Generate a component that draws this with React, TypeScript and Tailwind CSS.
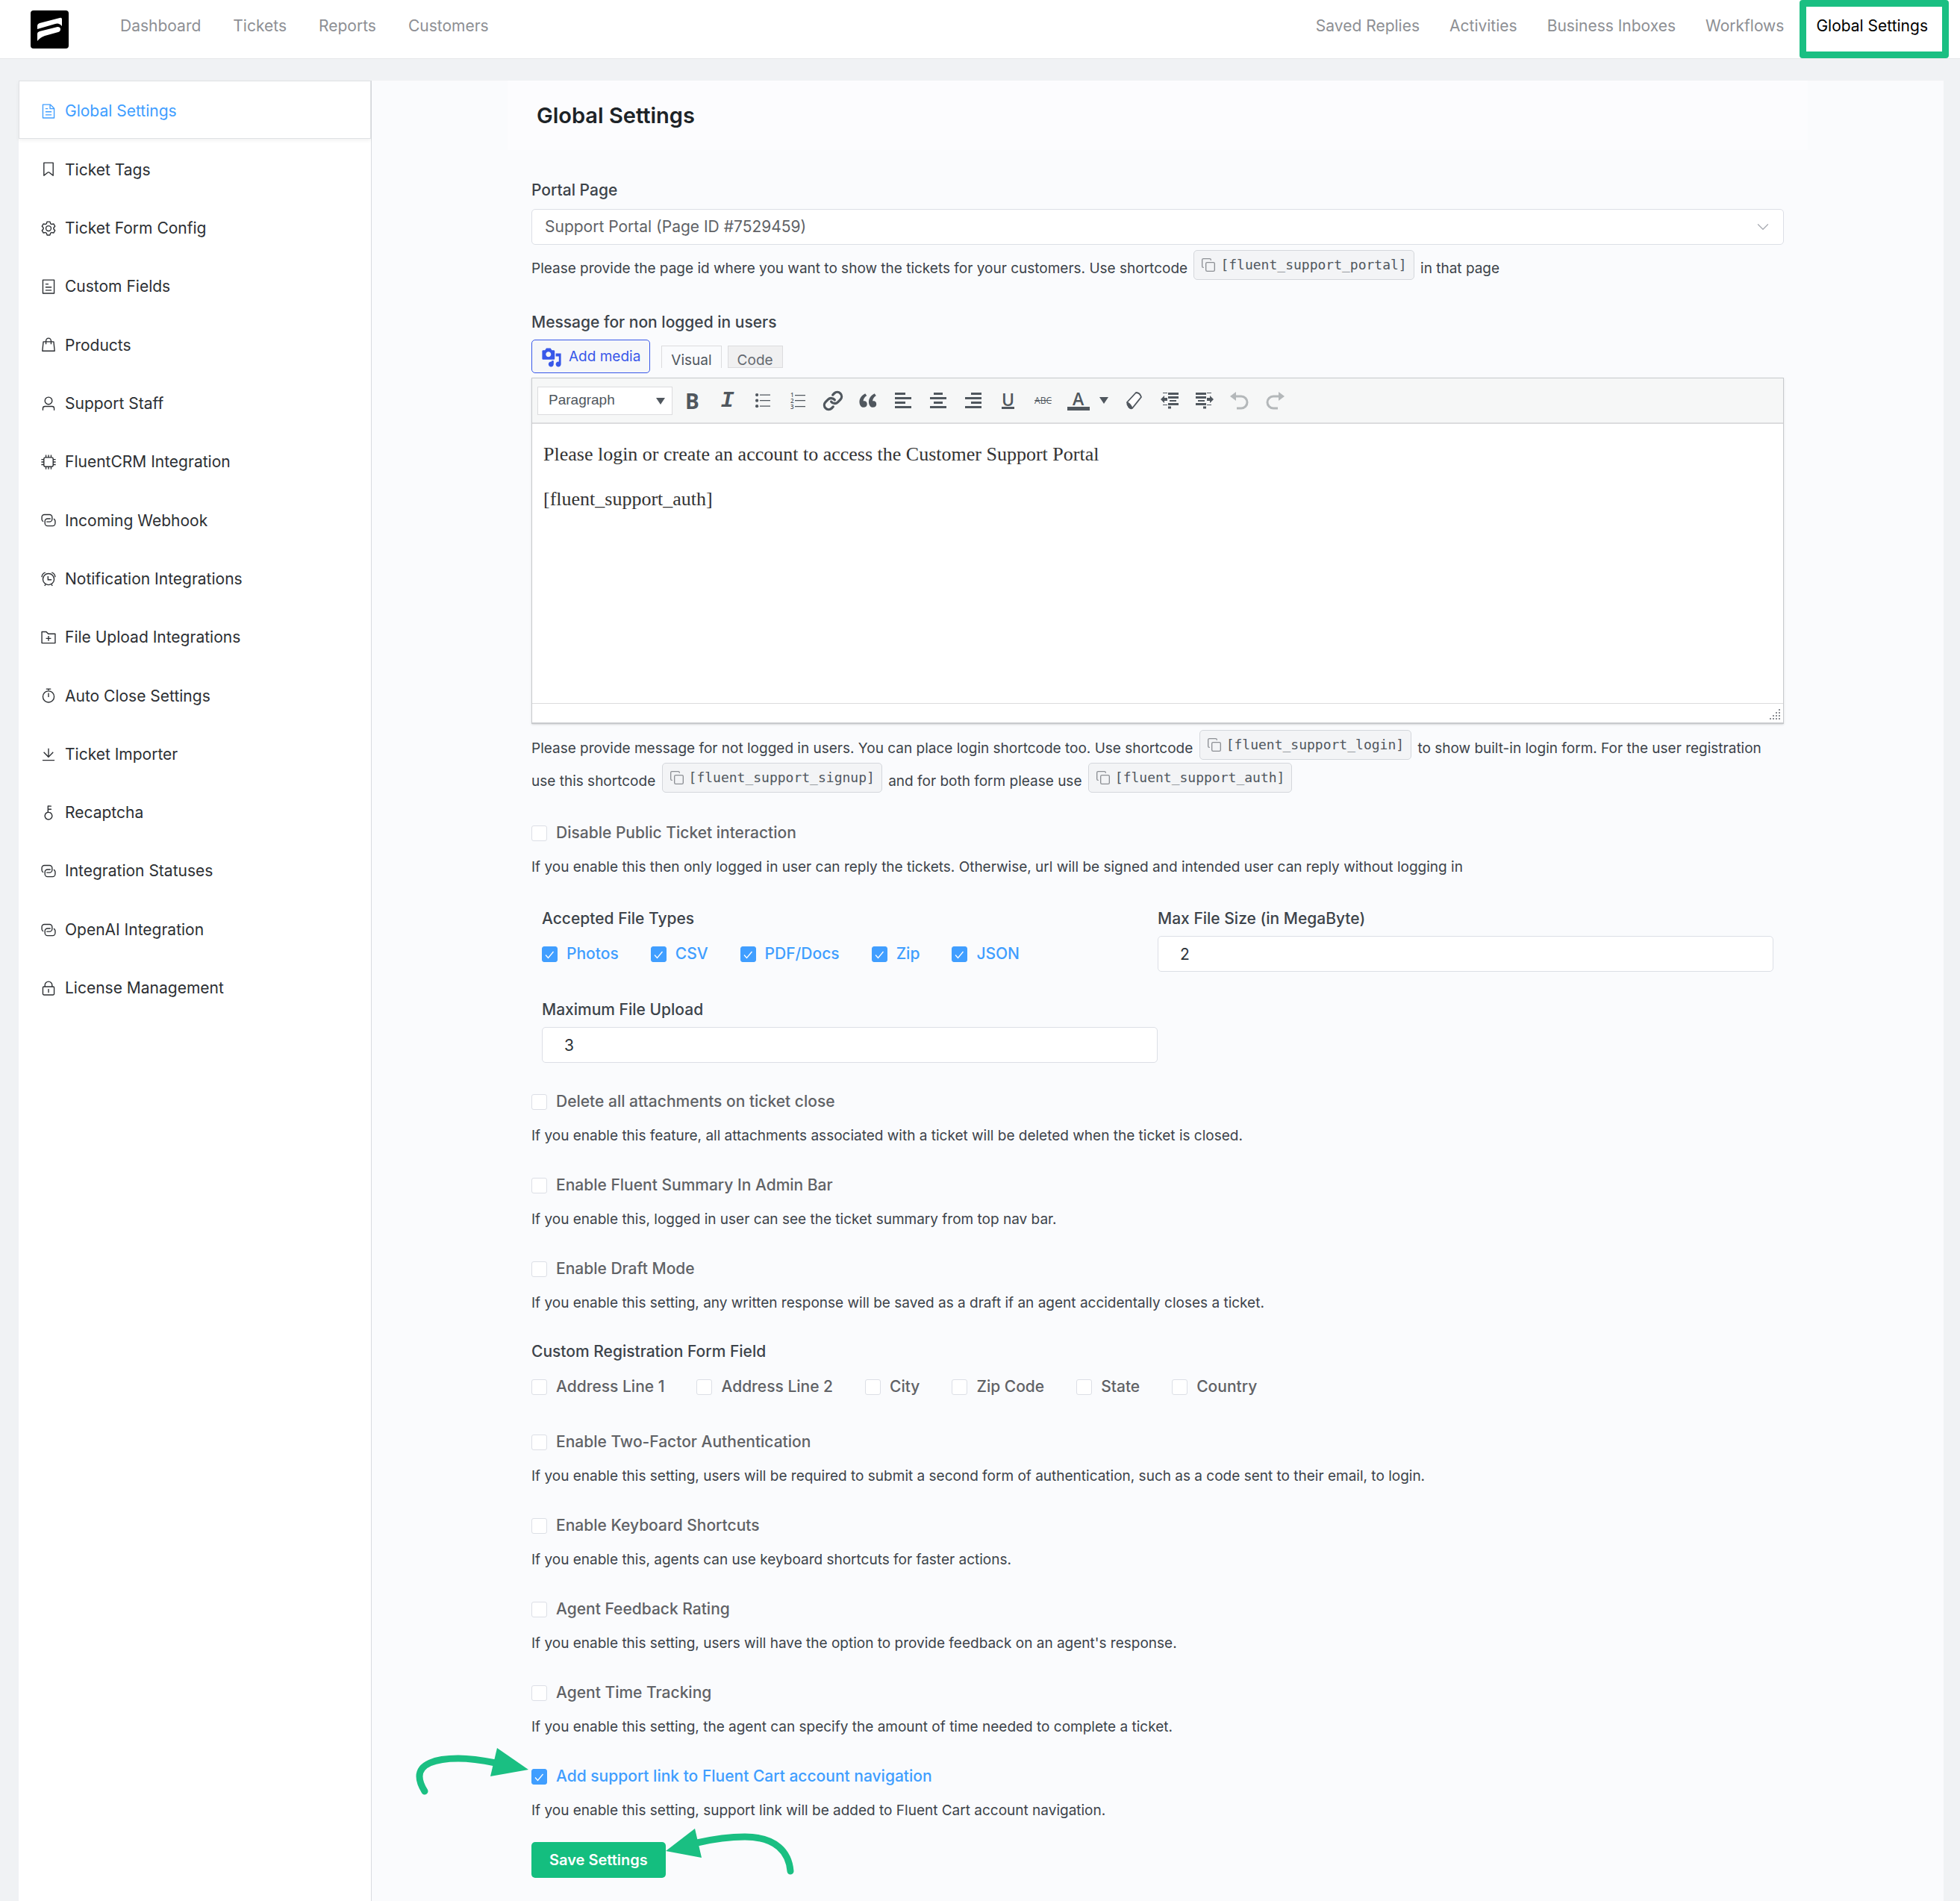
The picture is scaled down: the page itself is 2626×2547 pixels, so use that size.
import { ReactNode, useId, useState } from 'react';
import { ChevronDown, Copy, Link as LinkIcon } from 'lucide-react';

/* ==========================================================
   icons (1024 grid, filled)
   ========================================================== */
const connection =
  'M640 384v64H448a128 128 0 0 0-128 128v128a128 128 0 0 0 128 128h320a128 128 0 0 0 128-128V576a128 128 0 0 0-64-110.848V394.88c74.56 26.368 128 97.472 128 181.056v128a192 192 0 0 1-192 192H448a192 192 0 0 1-192-192V576a192 192 0 0 1 192-192zM384 640v-64h192a128 128 0 0 0 128-128V320a128 128 0 0 0-128-128H256a128 128 0 0 0-128 128v128a128 128 0 0 0 64 110.848v70.272A192 192 0 0 1 64 448V320a192 192 0 0 1 192-192h320a192 192 0 0 1 192 192v128a192 192 0 0 1-192 192z';

const icons = {
  document:
    'M832 384H576V128H192v768h640zm-26.496-64L640 154.496V320zM160 64h480l256 256v608a32 32 0 0 1-32 32H160a32 32 0 0 1-32-32V96a32 32 0 0 1 32-32m160 448h384v64H320zm0-192h160v64H320zm0 384h384v64H320z',
  bookmark:
    'M256 128v698.88l196.032-156.864a96 96 0 0 1 119.936 0L768 826.816V128zm-32-64h576a32 32 0 0 1 32 32v797.44a32 32 0 0 1-51.968 24.96L531.968 720a32 32 0 0 0-39.936 0L243.968 918.4A32 32 0 0 1 192 893.44V96a32 32 0 0 1 32-32',
  setting:
    'M600.704 64a32 32 0 0 1 30.464 22.208l35.2 109.376c14.784 7.232 28.928 15.36 42.432 24.512l112.384-24.192a32 32 0 0 1 34.432 15.36L944.32 364.8a32 32 0 0 1-4.032 37.504l-77.12 85.12a357.12 357.12 0 0 1 0 49.024l77.12 85.248a32 32 0 0 1 4.032 37.504l-88.704 153.6a32 32 0 0 1-34.432 15.296L708.8 803.904c-13.44 9.088-27.648 17.28-42.368 24.512l-35.264 109.376A32 32 0 0 1 600.704 960H423.296a32 32 0 0 1-30.464-22.208L357.696 828.48a351.616 351.616 0 0 1-42.56-24.64l-112.32 24.256a32 32 0 0 1-34.432-15.36L79.68 659.2a32 32 0 0 1 4.032-37.504l77.12-85.248a357.12 357.12 0 0 1 0-48.896l-77.12-85.248A32 32 0 0 1 79.68 364.8l88.704-153.6a32 32 0 0 1 34.432-15.296l112.32 24.256c13.568-9.152 27.776-17.408 42.56-24.64l35.2-109.312A32 32 0 0 1 423.232 64H600.64zm-23.424 64H446.72l-36.352 113.088-24.512 11.968a294.113 294.113 0 0 0-34.816 20.096l-22.656 15.36-116.224-25.088-65.28 113.152 79.68 88.192-1.92 27.136a293.12 293.12 0 0 0 0 40.192l1.92 27.136-79.808 88.192 65.344 113.152 116.224-25.024 22.656 15.296a294.113 294.113 0 0 0 34.816 20.096l24.512 11.968L446.72 896h130.688l36.48-113.152 24.448-11.904a288.282 288.282 0 0 0 34.752-20.096l22.592-15.296 116.288 25.024 65.28-113.152-79.744-88.192 1.92-27.136a293.12 293.12 0 0 0 0-40.256l-1.92-27.136 79.808-88.128-65.344-113.152-116.288 24.96-22.592-15.232a287.616 287.616 0 0 0-34.752-20.096l-24.448-11.904L577.344 128zM512 320a192 192 0 1 1 0 384 192 192 0 0 1 0-384m0 64a128 128 0 1 0 0 256 128 128 0 0 0 0-256',
  tickets:
    'M192 128v768h640V128zm-32-64h704a32 32 0 0 1 32 32v832a32 32 0 0 1-32 32H160a32 32 0 0 1-32-32V96a32 32 0 0 1 32-32m160 448h384v64H320zm0-192h192v64H320zm0 384h384v64H320z',
  goods:
    'M320 288v-22.336C320 154.688 405.504 64 512 64s192 90.688 192 201.664v22.4h131.072a32 32 0 0 1 31.808 28.8l57.6 576a32 32 0 0 1-31.808 35.2H131.328a32 32 0 0 1-31.808-35.2l57.6-576a32 32 0 0 1 31.808-28.8H320zm64 0h256v-22.336C640 189.248 582.272 128 512 128c-70.272 0-128 61.248-128 137.664v22.4zm-64 64H217.92l-51.2 512h690.56l-51.264-512H704v96a32 32 0 1 1-64 0v-96H384v96a32 32 0 0 1-64 0z',
  user: 'M512 512a192 192 0 1 0 0-384 192 192 0 0 0 0 384m0 64a256 256 0 1 1 0-512 256 256 0 0 1 0 512m320 320v-96a96 96 0 0 0-96-96H288a96 96 0 0 0-96 96v96a32 32 0 1 1-64 0v-96a160 160 0 0 1 160-160h448a160 160 0 0 1 160 160v96a32 32 0 1 1-64 0',
  cpu: 'M320 256a64 64 0 0 0-64 64v384a64 64 0 0 0 64 64h384a64 64 0 0 0 64-64V320a64 64 0 0 0-64-64zm0-64h384a128 128 0 0 1 128 128v384a128 128 0 0 1-128 128H320a128 128 0 0 1-128-128V320a128 128 0 0 1 128-128M480 64h64v128h-64zM320 64h64v128h-64zM640 64h64v128h-64zM480 832h64v128h-64zM320 832h64v128h-64zM640 832h64v128h-64zM64 480h128v64H64zM64 320h128v64H64zM64 640h128v64H64zM832 480h128v64H832zM832 320h128v64H832zM832 640h128v64H832z',
  alarm:
    'M512 832a320 320 0 1 0 0-640 320 320 0 0 0 0 640m0 64a384 384 0 1 1 0-768 384 384 0 0 1 0 768M292.3 824.6l55.4 32-48 83.1-55.4-32zM731.7 824.6l-55.4 32 48 83.1 55.4-32zM512 320h-64v256h256v-64H512zM128 384H64C64 206 206 64 320 64v64c-80 0-192 110-192 256M896 384h64C960 206 818 64 704 64v64c80 0 192 110 192 256',
  folder:
    'M128 192v640h768V320H485.76L357.504 192zm-32-64h287.872l128.384 128H928a32 32 0 0 1 32 32v576a32 32 0 0 1-32 32H96a32 32 0 0 1-32-32V160a32 32 0 0 1 32-32m384 416V416h64v128h128v64H544v128h-64V608H352v-64z',
  timer:
    'M512 896a320 320 0 1 0 0-640 320 320 0 0 0 0 640m0 64a384 384 0 1 1 0-768 384 384 0 0 1 0 768M480 352h64v248h-64zM544 128v96h-64v-96h-96a32 32 0 0 1 0-64h256a32 32 0 1 1 0 64z',
  download:
    'M160 832h704a32 32 0 1 1 0 64H160a32 32 0 1 1 0-64m384-253.696 236.288-236.352 45.248 45.248L508.8 704 192 387.2l45.248-45.248L480 584.704V128h64z',
  key: 'M448 456.064V96a32 32 0 0 1 32-32.064L672 64a32 32 0 0 1 0 64H512v128h160a32 32 0 0 1 0 64H512v128a256 256 0 1 1-64 8.064M512 896a192 192 0 1 0 0-384 192 192 0 0 0 0 384',
  connection,
  lock: 'M224 448a32 32 0 0 0-32 32v384a32 32 0 0 0 32 32h576a32 32 0 0 0 32-32V480a32 32 0 0 0-32-32zm0-64h576a96 96 0 0 1 96 96v384a96 96 0 0 1-96 96H224a96 96 0 0 1-96-96V480a96 96 0 0 1 96-96M512 544a32 32 0 0 1 32 32v192a32 32 0 1 1-64 0V576a32 32 0 0 1 32-32m192-160v-64a192 192 0 1 0-384 0v64zM512 64a256 256 0 0 1 256 256v64H256v-64A256 256 0 0 1 512 64',
};

type IconName = keyof typeof icons;

const MenuIcon = ({ name }: { name: IconName }) => (
  <svg viewBox="0 0 1024 1024" className="size-[22px] shrink-0 fill-current" aria-hidden="true">
    <path fillRule="evenodd" d={icons[name]} />
  </svg>
);

/* ==========================================================
   data
   ========================================================== */
const leftNav = ['Dashboard', 'Tickets', 'Reports', 'Customers'];
const rightNav = ['Saved Replies', 'Activities', 'Business Inboxes', 'Workflows'];

const menu: { label: string; icon: IconName }[] = [
  { label: 'Global Settings', icon: 'document' },
  { label: 'Ticket Tags', icon: 'bookmark' },
  { label: 'Ticket Form Config', icon: 'setting' },
  { label: 'Custom Fields', icon: 'tickets' },
  { label: 'Products', icon: 'goods' },
  { label: 'Support Staff', icon: 'user' },
  { label: 'FluentCRM Integration', icon: 'cpu' },
  { label: 'Incoming Webhook', icon: 'connection' },
  { label: 'Notification Integrations', icon: 'alarm' },
  { label: 'File Upload Integrations', icon: 'folder' },
  { label: 'Auto Close Settings', icon: 'timer' },
  { label: 'Ticket Importer', icon: 'download' },
  { label: 'Recaptcha', icon: 'key' },
  { label: 'Integration Statuses', icon: 'connection' },
  { label: 'OpenAI Integration', icon: 'connection' },
  { label: 'License Management', icon: 'lock' },
];

const fileTypes = ['Photos', 'CSV', 'PDF/Docs', 'Zip', 'JSON'];
const registrationFields = ['Address Line 1', 'Address Line 2', 'City', 'Zip Code', 'State', 'Country'];

/* ==========================================================
   form parts
   ========================================================== */
function Check({ label, defaultChecked = false }: { label: string; defaultChecked?: boolean }) {
  const id = useId();
  const [checked, setChecked] = useState(defaultChecked);

  return (
    <div className="flex items-center gap-3">
      <span className="relative size-[21px] shrink-0">
        <input
          id={id}
          type="checkbox"
          checked={checked}
          onChange={(e) => setChecked(e.target.checked)}
          className="block size-full appearance-none rounded-[3px] border border-[#dcdfe6] bg-white
                     checked:border-[#409eff] checked:bg-[#409eff]"
        />
        {checked && (
          <svg viewBox="0 0 21 21" className="pointer-events-none absolute inset-0" aria-hidden="true">
            <path d="M5 11.5l3.5 4L15.5 7" fill="none" stroke="#fff" strokeWidth="1.3" />
          </svg>
        )}
      </span>
      <label
        htmlFor={id}
        className={`text-[21px] leading-8 font-medium ${checked ? 'text-[#409eff]' : 'text-[#606266]'}`}
      >
        {label}
      </label>
    </div>
  );
}

function Setting({ label, help, defaultChecked }: { label: string; help: string; defaultChecked?: boolean }) {
  return (
    <div>
      <Check label={label} defaultChecked={defaultChecked} />
      <p className="mt-4 text-[19px] leading-7 text-[#3c434a]">{help}</p>
    </div>
  );
}

const labelClass = 'block text-[21px] leading-[30px] font-medium text-[#3c434a]';

const Shortcode = ({ code }: { code: string }) => (
  <button
    type="button"
    className="mx-[3px] my-[2px] inline-flex h-10 items-center gap-[6px] rounded-[5px] border border-[#d4d7dc]
               bg-[#f3f4f6] px-[9px] align-[1px] font-['DejaVu_Sans_Mono',monospace] text-[18px] text-[#50575e]"
  >
    <Copy className="size-5 text-[#8c8f94]" strokeWidth={1.6} />
    {`[${code}]`}
  </button>
);

function NumberField({ label, value }: { label: string; value: string }) {
  const id = useId();
  return (
    <div>
      <label htmlFor={id} className={labelClass}>{label}</label>
      <input
        id={id}
        type="text"
        defaultValue={value}
        className="mt-2 block h-12 w-full rounded-[5px] border border-[#dcdfe6] bg-white px-[29px] text-[21px] text-[#2c3338]"
      />
    </div>
  );
}

/* ==========================================================
   editor toolbar
   ========================================================== */
const Tool = ({ title, children }: { title: string; children: ReactNode }) => (
  <button type="button" title={title} className="flex h-10 w-[47px] items-center justify-center text-[#50575e]">
    {children}
  </button>
);

// rows are [x, width] pairs, one bar every 6px
const Bars = ({ rows }: { rows: number[][] }) => (
  <svg viewBox="0 0 22 22" className="size-[22px] fill-current" aria-hidden="true">
    {rows.map(([x, w], i) => (
      <rect key={i} x={x} y={i * 6} width={w} height="3" />
    ))}
  </svg>
);

const IndentIcon = ({ flip = false }: { flip?: boolean }) => (
  <svg viewBox="0 0 24 22" className={`h-[22px] w-6 fill-current ${flip ? '-scale-x-100' : ''}`} aria-hidden="true">
    <path d="M10 0h14v3H10zM10 5h14v3H10zM12 10h9v2h-9zM10 14h14v3H10zM10 18.500h4v3h-4zM3 0h6v1H3zM3 16h6v1H3zM0 9l5-5v3h4v4H5v3z" />
  </svg>
);

const UndoIcon = ({ flip = false }: { flip?: boolean }) => (
  <svg
    viewBox="0 0 26 24"
    className={`h-6 w-[26px] text-[#b4b8ba] ${flip ? '-scale-x-100' : ''}`}
    aria-hidden="true"
  >
    <path d="M0 6l8-6v12z" fill="currentColor" />
    <path d="M8 6h7a8 8 0 0 1 0 16H9" fill="none" stroke="currentColor" strokeWidth="3" />
  </svg>
);

const Toolbar = () => (
  <div className="flex h-[61px] items-center border-b-2 border-[#dcdcde] bg-[#f6f7f7] pl-[7px]">
    <div className="relative mr-[3px]">
      <select
        aria-label="Block format"
        className="block h-[38px] w-[181px] appearance-none border border-[#dcdcde] bg-white pl-[14px]
                   font-['Liberation_Sans',sans-serif] text-[19px] text-[#50575e]"
      >
        <option>Paragraph</option>
      </select>
      <svg viewBox="0 0 12 9" className="pointer-events-none absolute top-[15px] right-[10px] h-[9px] w-3 fill-[#50575e]">
        <path d="M0 0h12L6 9z" />
      </svg>
    </div>
    <Tool title="Bold">
      <span className="font-['Open_Sans',sans-serif] text-[28px] leading-none font-bold">B</span>
    </Tool>
    <Tool title="Italic">
      <span className="font-['Liberation_Mono',monospace] text-[30px] leading-none font-bold italic">I</span>
    </Tool>
    <Tool title="Bulleted list">
      <svg viewBox="0 0 20 20" className="size-5 fill-current">
        <path d="M6 1.5h14v1.3H6zM6 9h14v1.3H6zM6 16.500h14v1.3H6z" />
        <circle cx="2.100" cy="2.100" r="2.100" />
        <circle cx="2.100" cy="9.700" r="2.100" />
        <circle cx="2.100" cy="17.200" r="2.100" />
      </svg>
    </Tool>
    <Tool title="Numbered list">
      <svg viewBox="0 0 20 30" className="h-[30px] w-5 fill-current font-['Open_Sans',sans-serif] text-[8px] font-semibold">
        <path d="M6 7h14v1.300H6zM6 14h14v1.300H6zM6 22h14v1.300H6z" />
        <text x="0" y="10">1</text>
        <text x="0" y="18">2</text>
        <text x="0" y="26">3</text>
      </svg>
    </Tool>
    <Tool title="Insert link"><LinkIcon className="size-7" strokeWidth={2.8} /></Tool>
    <Tool title="Blockquote">
      <svg viewBox="0 0 20 20" className="size-[31px] fill-current">
        <path d="M9.490 13.220c0-.740-.200-1.380-.610-1.900-.620-.780-1.830-.880-2.530-.720-.290-1.650 1.110-3.750 2.920-4.650L7.880 4c-2.730 1.300-5.420 4.280-4.960 8.050C3.210 14.430 4.590 16 6.540 16c.850 0 1.560-.250 2.120-.750s.830-1.180.830-2.030zm8.050 0c0-.740-.200-1.380-.610-1.900-.630-.780-1.830-.880-2.530-.720-.290-1.650 1.110-3.750 2.920-4.650L15.930 4c-2.730 1.300-5.410 4.280-4.950 8.050.290 2.380 1.660 3.950 3.610 3.950.850 0 1.560-.250 2.120-.750s.830-1.180.830-2.030z" />
      </svg>
    </Tool>
    <Tool title="Align left"><Bars rows={[[0, 14], [0, 22], [0, 14], [0, 22]]} /></Tool>
    <Tool title="Align center"><Bars rows={[[5, 12], [0, 22], [5, 12], [0, 22]]} /></Tool>
    <Tool title="Align right"><Bars rows={[[8, 14], [0, 22], [8, 14], [0, 22]]} /></Tool>
    <Tool title="Underline">
      <span className="border-b-3 border-current font-['Open_Sans',sans-serif] text-[23px] leading-5 font-semibold">U</span>
    </Tool>
    <Tool title="Strikethrough">
      <span className="font-['Open_Sans',sans-serif] text-[12px] leading-none line-through">ABC</span>
    </Tool>
    <Tool title="Text color">
      <span className="w-[30px] border-b-5 border-current text-center font-['Open_Sans',sans-serif] text-[23px] leading-[22px] font-semibold">
        A
      </span>
    </Tool>
    <button type="button" title="Pick text color" className="mr-[6px] flex h-10 w-[22px] items-center justify-center">
      <svg viewBox="0 0 12 9" className="h-[9px] w-3 fill-[#50575e]"><path d="M0 0h12L6 9z" /></svg>
    </button>
    <Tool title="Clear formatting">
      <svg viewBox="0 0 22 24" className="h-6 w-[22px]">
        <path d="M1 14L13 1q5 0 7 6L8 22z" fill="#fff" stroke="currentColor" strokeWidth="1.800" strokeLinejoin="round" />
        <path d="M1 14q5 1 7 8l-1 1q-4 0-6-6z" fill="currentColor" stroke="currentColor" />
      </svg>
    </Tool>
    <Tool title="Decrease indent"><IndentIcon /></Tool>
    <Tool title="Increase indent"><IndentIcon flip /></Tool>
    <Tool title="Undo"><UndoIcon /></Tool>
    <Tool title="Redo"><UndoIcon flip /></Tool>
  </div>
);

/* ==========================================================
   page
   ========================================================== */
const Header = () => (
  <header className="flex h-[79px] items-start justify-between border-b border-[#e6e8ea] bg-white text-[21px] text-[#8d8f94]">
    <div className="flex h-[78px] items-center pl-[41px]">
      <svg viewBox="0 0 51 51" className="size-[51px]" role="img" aria-label="Fluent Support">
        <rect width="51" height="51" rx="4" />
        <path
          d="M9 25v-4q0-3 3-4l27-7q3-1 3 2v9q-4-5-9-3L9 25M9 41V31q0-2 3-3l24-6q4 0 4 3 0 3-3 4l-18 5q-6 2-10 7"
          fill="#fff"
        />
      </svg>
      <nav className="flex gap-[43px] pb-2 pl-[69px]">
        {leftNav.map((item) => <a key={item} href="#">{item}</a>)}
      </nav>
    </div>
    <nav className="flex h-[78px] items-center pr-[15px]">
      <div className="flex gap-10 pr-[21px] pb-2">
        {rightNav.map((item) => <a key={item} href="#">{item}</a>)}
      </div>
      <a
        href="#"
        aria-current="page"
        className="flex h-[78px] items-center rounded-[4px] border-[9px] border-[#1abf82] pr-[19px] pb-2 pl-[13px] text-black"
      >
        Global Settings
      </a>
    </nav>
  </header>
);

const Sidebar = () => (
  <aside className="w-[473px] shrink-0 border-r border-[#d9dce0] bg-white">
    <ul className="grid min-h-[1253px] auto-rows-fr text-[21px] text-[#2c2f33]">
      {menu.map(({ label, icon }, i) => (
        <li key={label} className="flex">
          <a
            href="#"
            className={`flex flex-1 items-center gap-[11px] border pt-1 pl-7 ${
              i === 0
                ? 'border-[#dfe1e4] text-[#409eff] shadow-[0_2px_5px_rgba(0,0,0,0.06)]'
                : 'border-transparent'
            }`}
          >
            <MenuIcon name={icon} />
            {label}
          </a>
        </li>
      ))}
    </ul>
  </aside>
);

export default function App() {
  return (
    <div className="flex min-h-screen flex-col bg-[#f0f2f4] font-[Inter,sans-serif]">
      <Header />
      <div className="flex flex-1 pt-[29px] pr-[22px] pl-[25px]">
        <Sidebar />

        <main className="flex-1 bg-[#fafbfd]">
          <div className="mx-auto max-w-[1742px]">
            <h1 className="flex h-[93px] items-center bg-[#fcfcfe] pl-[39px] text-[29px] font-semibold text-[#1d2327]">
              Global Settings
            </h1>

            <form className="flex flex-col gap-9 px-8 pt-[39px] pb-[31px]" onSubmit={(e) => e.preventDefault()}>
              {/* portal page */}
              <div className="pb-1">
                <label htmlFor="portal-page" className={labelClass}>Portal Page</label>
                <div className="relative mt-[10px]">
                  <select
                    id="portal-page"
                    className="block h-12 w-full appearance-none rounded-[5px] border border-[#dcdfe6] bg-white
                               pl-[17px] text-[21px] text-[#606266]"
                  >
                    <option>Support Portal (Page ID #7529459)</option>
                  </select>
                  <ChevronDown
                    className="pointer-events-none absolute top-[11px] right-[15px] size-[26px] text-[#a8abb2]"
                    strokeWidth={1.2}
                  />
                </div>
                <p className="mt-[5px] text-[19px] leading-[30px] text-[#3c434a]">
                  Please provide the page id where you want to show the tickets for your customers. Use shortcode{' '}
                  <Shortcode code="fluent_support_portal" /> in that page
                </p>
              </div>

              {/* message editor */}
              <div>
                <p className={labelClass}>Message for non logged in users</p>
                <div className="mt-2 flex h-[45px] items-start text-[19px]">
                  <button
                    type="button"
                    className="flex h-[45px] items-center gap-[9px] rounded-[5px] border border-[#3858e9] bg-[#f6f7f9] px-3 pt-[2px] text-[#3858e9]"
                  >
                    <svg viewBox="0 0 20 20" className="size-7 fill-current" aria-hidden="true">
                      <path d="M13 11V4c0-.550-.450-1-1-1h-1.670L9 1H5L3.670 3H2c-.550 0-1 .450-1 1v7c0 .550.450 1 1 1h10c.550 0 1-.450 1-1zM7 4.500c1.380 0 2.500 1.120 2.500 2.500S8.380 9.500 7 9.500 4.500 8.380 4.500 7 5.620 4.500 7 4.500zM14 6h5v10.500c0 1.380-1.120 2.500-2.500 2.500S14 17.880 14 16.500s1.120-2.500 2.500-2.500c.170 0 .340.020.500.050V9h-3V6zm-4 8.050V13h2v3.500c0 1.380-1.120 2.500-2.500 2.500S7 17.880 7 16.500 8.120 14 9.500 14c.170 0 .340.020.500.050z" />
                    </svg>
                    Add media
                  </button>
                  <button
                    type="button"
                    className="mt-2 ml-[15px] h-[30px] border border-b-0 border-[#dcdcde] bg-[#fafbfd] px-3 pt-[9px] leading-5 text-[#50575e]"
                  >
                    Visual
                  </button>
                  <button
                    type="button"
                    className="mt-2 ml-2 h-[30px] border border-[#dcdcde] bg-[#f0f0f1] px-3 pt-[9px] leading-5 text-[#646970]"
                  >
                    Code
                  </button>
                </div>
                <div className="mt-[6px] border border-b-2 border-[#c8cacd] bg-white shadow-sm">
                  <Toolbar />
                  <div
                    contentEditable
                    suppressContentEditableWarning
                    className="h-[374px] px-[15px] pt-[22px] font-[Georgia,'Liberation_Serif',serif] text-[26px] leading-[38px] text-[#333]"
                  >
                    <p>Please login or create an account to access the Customer Support Portal</p>
                    <p className="mt-[22px]">[fluent_support_auth]</p>
                  </div>
                  <div className="flex h-[26px] items-end justify-end border-t border-[#dcdcde] p-[3px]">
                    <svg viewBox="0 0 16 16" className="size-4 fill-[#8c8f94]" aria-hidden="true">
                      <path d="M13 1h2v2h-2zM13 5h2v2h-2zM13 9h2v2h-2zM13 13h2v2h-2zM9 5h2v2H9zM9 9h2v2H9zM9 13h2v2H9zM5 9h2v2H5zM5 13h2v2H5zM1 13h2v2H1z" />
                    </svg>
                  </div>
                </div>
                <p className="mt-[6px] text-[19px] leading-[30px] text-[#3c434a]">
                  Please provide message for not logged in users. You can place login shortcode too. Use shortcode{' '}
                  <Shortcode code="fluent_support_login" /> to show built-in login form. For the user registration use
                  this shortcode <Shortcode code="fluent_support_signup" /> and for both form please use{' '}
                  <Shortcode code="fluent_support_auth" />
                </p>
              </div>

              <Setting
                label="Disable Public Ticket interaction"
                help="If you enable this then only logged in user can reply the tickets. Otherwise, url will be signed and intended user can reply without logging in"
              />

              {/* file limits */}
              <div className="grid grid-cols-2 gap-y-9 px-[14px] pt-1">
                <fieldset>
                  <legend className={labelClass}>Accepted File Types</legend>
                  <div className="mt-2 flex h-12 items-center gap-[43px]">
                    {fileTypes.map((type) => <Check key={type} label={type} defaultChecked />)}
                  </div>
                </fieldset>
                <NumberField label="Max File Size (in MegaByte)" value="2" />
                <NumberField label="Maximum File Upload" value="3" />
              </div>

              <Setting
                label="Delete all attachments on ticket close"
                help="If you enable this feature, all attachments associated with a ticket will be deleted when the ticket is closed."
              />
              <Setting
                label="Enable Fluent Summary In Admin Bar"
                help="If you enable this, logged in user can see the ticket summary from top nav bar."
              />
              <Setting
                label="Enable Draft Mode"
                help="If you enable this setting, any written response will be saved as a draft if an agent accidentally closes a ticket."
              />

              <fieldset className="pb-[6px]">
                <legend className={labelClass}>Custom Registration Form Field</legend>
                <div className="mt-4 flex gap-[43px]">
                  {registrationFields.map((field) => <Check key={field} label={field} />)}
                </div>
              </fieldset>

              <Setting
                label="Enable Two-Factor Authentication"
                help="If you enable this setting, users will be required to submit a second form of authentication, such as a code sent to their email, to login."
              />
              <Setting
                label="Enable Keyboard Shortcuts"
                help="If you enable this, agents can use keyboard shortcuts for faster actions."
              />
              <Setting
                label="Agent Feedback Rating"
                help="If you enable this setting, users will have the option to provide feedback on an agent's response."
              />
              <Setting
                label="Agent Time Tracking"
                help="If you enable this setting, the agent can specify the amount of time needed to complete a ticket."
              />

              <div className="relative flex flex-col items-start gap-7">
                <Setting
                  label="Add support link to Fluent Cart account navigation"
                  help="If you enable this setting, support link will be added to Fluent Cart account navigation."
                  defaultChecked
                />
                <svg
                  viewBox="0 0 160 72"
                  className="pointer-events-none absolute -top-7 -left-40 h-[72px] w-40"
                  aria-hidden="true"
                >
                  <path
                    d="M17 64C12 56 10 50 10 44C10 28 30 20 62 20C78 20 92 22 112 26"
                    fill="none" stroke="#1abf82" strokeWidth="9" strokeLinecap="round"
                  />
                  <path d="M114 6L156 35L105 44z" fill="#1abf82" />
                </svg>

                <div className="relative">
                  <button type="submit" className="h-12 rounded-[5px] bg-[#14be7f] px-6 text-[20px] font-semibold text-white">
                    Save Settings
                  </button>
                  <svg
                    viewBox="0 0 180 72"
                    className="pointer-events-none absolute -top-6 left-[178px] h-[72px] w-[180px]"
                    aria-hidden="true"
                  >
                    <path
                      d="M44 25C70 19 90 17 108 17C150 17 167 38 169 63"
                      fill="none" stroke="#1abf82" strokeWidth="9" strokeLinecap="round"
                    />
                    <path d="M2 36L41 6L50 45z" fill="#1abf82" />
                  </svg>
                </div>
              </div>
            </form>
          </div>
        </main>
      </div>
    </div>
  );
}
